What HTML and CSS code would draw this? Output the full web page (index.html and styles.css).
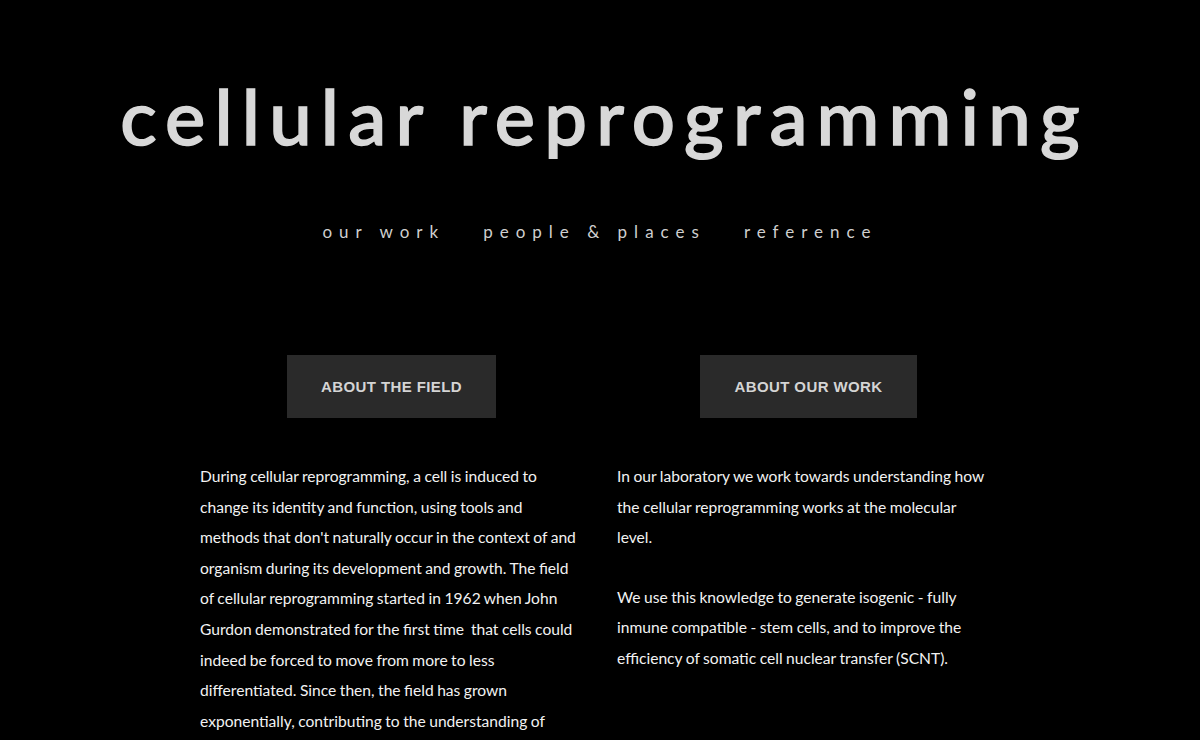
FILE: index.html
```html
<!DOCTYPE html>
<html lang="en">
<head>
    <meta charset="UTF-8">
    <meta name="viewport" content="width=device-width, initial-scale=1.0">
    <title>cellular reprogramming</title>
    <link rel="stylesheet" href="styles.css">
</head>
<body>

<header class="site-header">
    <h1 class="site-title">cellular reprogramming</h1>
    <nav class="site-nav">
        <a href="#">our work</a>
        <a href="#">people &amp; places</a>
        <a href="#">reference</a>
    </nav>
</header>

<main class="intro">
    <section class="intro-col">
        <a class="intro-button" href="#">About the field</a>
        <div class="intro-text">
            <p>During cellular reprogramming, a cell is induced to change its identity and function, using tools and methods that don't naturally occur in the context of and organism during its development and growth. The field of cellular reprogramming started in 1962 when John Gurdon demonstrated for the first time&nbsp; that cells could indeed be forced to move from more to less differentiated. Since then, the field has grown exponentially, contributing to the understanding of how cell identity is established and maintained.</p>
        </div>
    </section>

    <section class="intro-col">
        <a class="intro-button" href="#">About our work</a>
        <div class="intro-text">
            <p>In our laboratory we work towards understanding how the cellular reprogramming works at the molecular level.</p>
            <p>We use this knowledge to generate isogenic - fully inmune compatible - stem cells, and to improve the efficiency of somatic cell nuclear transfer (SCNT).</p>
        </div>
    </section>
</main>

</body>
</html>
```

FILE: styles.css
```css
body {
    margin: 0;
    background-color: #000;
    color: #f2f2f2;
    font-family: Lato, "Open Sans", sans-serif;
}

a {
    color: inherit;
    text-decoration: none;
}

.site-header {
    text-align: center;
    padding-top: 78px;
}

.site-title {
    margin: 0;
    font-size: 76px;
    font-weight: 500;
    line-height: 1;
    letter-spacing: 9.2px;
    padding-left: 9px;
    color: #d8d8d8;
    -webkit-text-stroke: 1.5px #d8d8d8;
}

.site-nav {
    display: flex;
    justify-content: center;
    gap: 38px;
    margin-top: 67px;
    font-size: 17px;
    letter-spacing: 7px;
    color: #cfcfcf;
}

.intro {
    width: 800px;
    margin: 113px auto 0;
    display: grid;
    grid-template-columns: 383px 383px;
    column-gap: 34px;
}

.intro-col {
    display: flex;
    flex-direction: column;
    align-items: center;
}

.intro-button {
    background-color: #2a2a2a;
    color: #d4d4d4;
    font-family: "Liberation Sans", Arial, sans-serif;
    font-weight: bold;
    font-size: 15px;
    letter-spacing: 0.4px;
    text-transform: uppercase;
    padding: 23px 34px;
}

.intro-text {
    align-self: stretch;
    margin-top: 43px;
    padding-right: 7px;
    font-size: 15.6px;
    line-height: 30.6px;
    word-spacing: -0.5px;
}

.intro-text p {
    margin: 0 0 29px;
}
```
